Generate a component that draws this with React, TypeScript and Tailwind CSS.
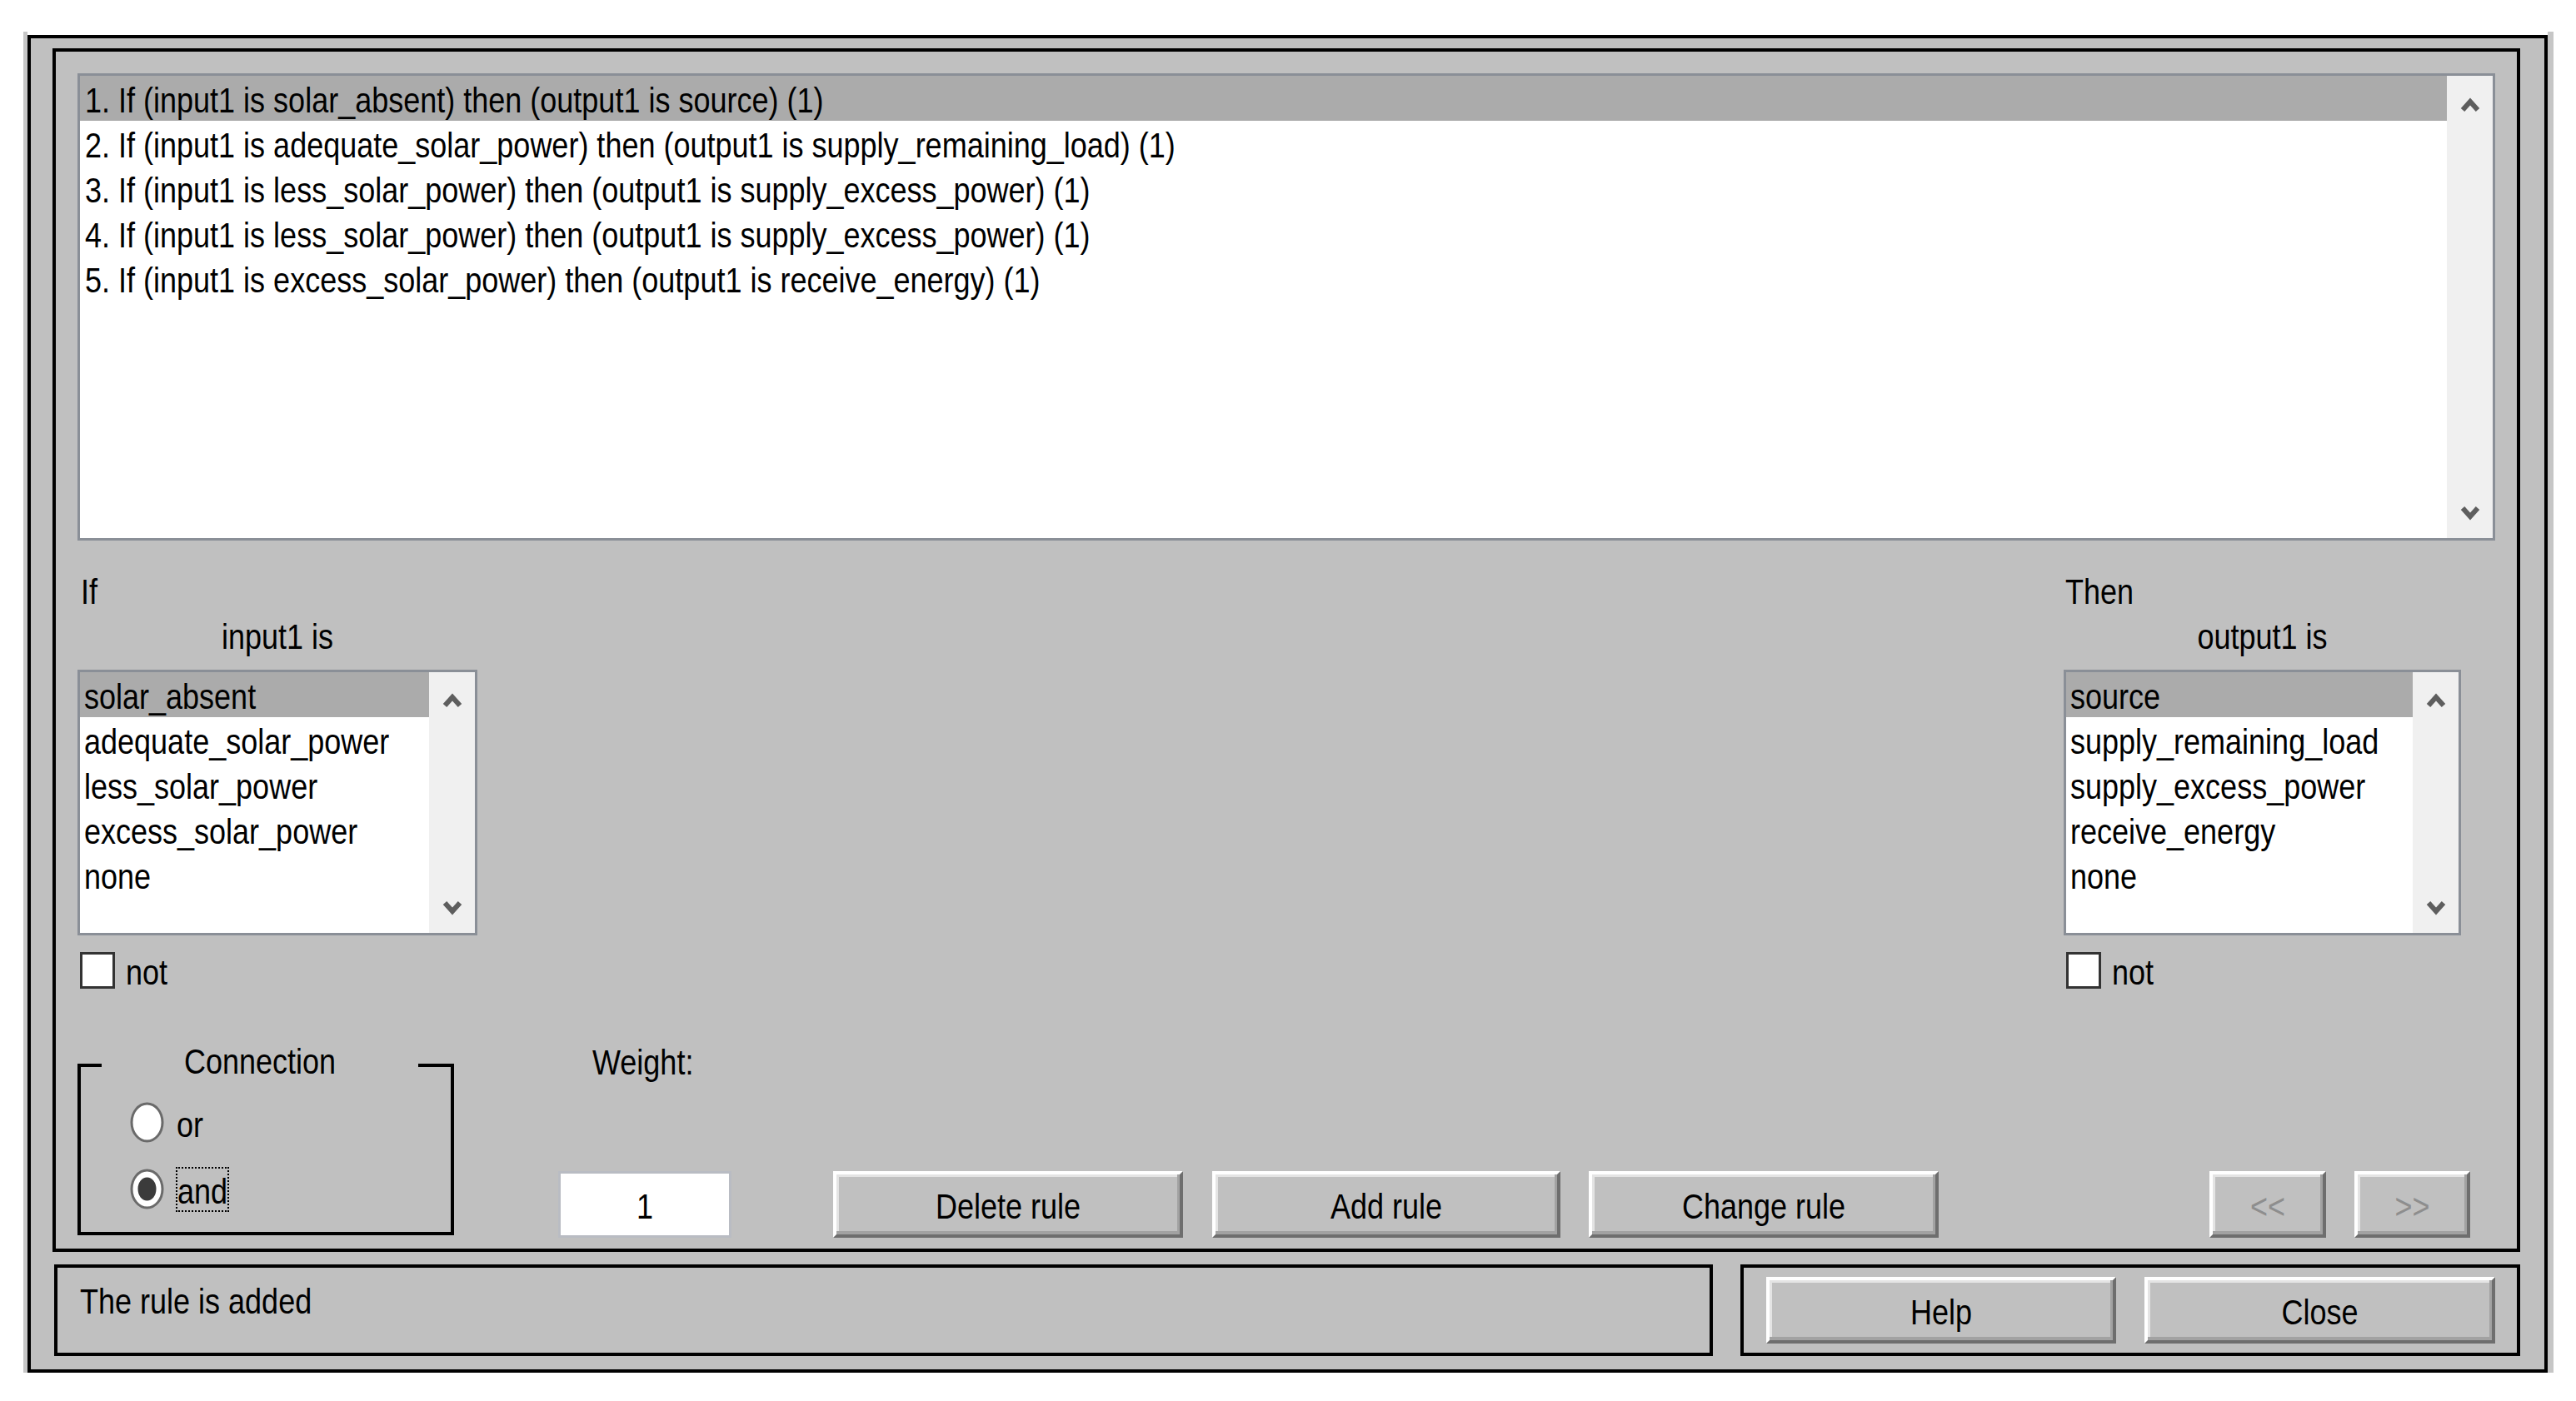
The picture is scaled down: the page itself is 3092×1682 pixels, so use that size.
import React from 'react';

const rules = [
  '1. If (input1 is solar_absent) then (output1 is source) (1)',
  '2. If (input1 is adequate_solar_power) then (output1 is supply_remaining_load) (1)',
  '3. If (input1 is less_solar_power) then (output1 is supply_excess_power) (1)',
  '4. If (input1 is less_solar_power) then (output1 is supply_excess_power) (1)',
  '5. If (input1 is excess_solar_power) then (output1 is receive_energy) (1)',
];

const inputTerms = ['solar_absent', 'adequate_solar_power', 'less_solar_power', 'excess_solar_power', 'none'];
const outputTerms = ['source', 'supply_remaining_load', 'supply_excess_power', 'receive_energy', 'none'];

// the screenshot is stretched vertically, so glyphs are a bit taller than Arial
function T({ children, up }: { children: React.ReactNode; up?: boolean }) {
  return (
    <span className={`inline-block scale-y-[1.16] ${up ? '-translate-y-[4px]' : 'translate-y-[3px]'}`}>
      {children}
    </span>
  );
}

function Arrow({ down }: { down?: boolean }) {
  return (
    <svg width="24" height="22" viewBox="0 0 24 22" className="block">
      <path
        d={down ? 'M3 6 L12 16 L21 6' : 'M3 16 L12 6 L21 16'}
        fill="none"
        stroke="#5e5e5e"
        strokeWidth="6"
      />
    </svg>
  );
}

function ScrollBar({ top, bottom }: { top: string; bottom: string }) {
  return (
    <div className={`flex w-[55px] flex-col items-center justify-between bg-[#f0f0f0] ${top} ${bottom}`}>
      <Arrow />
      <Arrow down />
    </div>
  );
}

function TermList({ items }: { items: string[] }) {
  return (
    <div className="mt-[15px] flex h-[319px] border-[3px] border-[#8a8f97] bg-white">
      <div className="flex-1">
        {items.map((t, i) => (
          <div key={t} className={`h-[54px] pl-[5px] leading-[54px] ${i === 0 ? 'bg-[#ababab]' : ''}`}>
            <T>{t}</T>
          </div>
        ))}
      </div>
      <ScrollBar top="pt-[24px]" bottom="pb-[20px]" />
    </div>
  );
}

function NotBox() {
  return (
    <div className="mt-[20px] flex items-center">
      <div className="ml-[3px] h-[44px] w-[42px] border-[3px] border-[#333333] bg-white" />
      <span className="ml-[13px] leading-[44px]">
        <T>not</T>
      </span>
    </div>
  );
}

function Button({ label, w, dim }: { label: string; w: string; dim?: boolean }) {
  return (
    <div
      className={`flex h-[80px] ${w} items-center justify-center border-4 border-t-white border-l-white border-r-[#6e6e6e] border-b-[#6e6e6e] bg-[#c0c0c0] shadow-[inset_-3px_-4px_0_#a2a2a2,inset_3px_3px_0_#e4e4e4] ${dim ? 'text-[#8e8e8e]' : 'text-black'}`}
    >
      <T>{label}</T>
    </div>
  );
}

function Radio({ on }: { on?: boolean }) {
  return (
    <svg width="41" height="49" viewBox="0 0 41 49" className="block">
      <ellipse cx="20.5" cy="24.5" rx="18.5" ry="22.5" fill="#ffffff" stroke="#6a6a6a" strokeWidth="3" />
      {on && <ellipse cx="20.5" cy="24.5" rx="11" ry="14" fill="#3b3b3b" />}
    </svg>
  );
}

export default function App() {
  return (
    <div className="h-[1682px] w-[3092px] bg-white pl-[28px] pt-[38px] font-['Liberation_Sans',Arial,sans-serif] text-[36px] text-black">
      <div className="w-[3037px] border-l-[5px] border-r-[7px] border-[#c6c6c6] pt-[4px]">
        <div className="h-[1606px] border-4 border-black bg-[#c0c0c0] pt-[12px]">
          {/* rule editor panel */}
          <div className="ml-[26px] h-[1445px] w-[2962px] border-4 border-black">
            <div className="mx-[26px] mt-[26px] flex h-[561px] border-[3px] border-[#8a8f97] bg-white">
              <div className="flex-1">
                {rules.map((r, i) => (
                  <div key={r} className={`h-[54px] pl-[6px] leading-[54px] ${i === 0 ? 'bg-[#ababab]' : ''}`}>
                    <T>{r}</T>
                  </div>
                ))}
              </div>
              <ScrollBar top="pt-[25px]" bottom="pb-[20px]" />
            </div>

            <div className="ml-[26px] mr-[67px] mt-[32px] flex justify-between">
              <div className="w-[480px]">
                <div className="pl-[4px] leading-[54px]">
                  <T>If</T>
                </div>
                <div className="text-center leading-[54px]">
                  <T>input1 is</T>
                </div>
                <TermList items={inputTerms} />
                <NotBox />
              </div>
              <div className="w-[477px]">
                <div className="pl-[2px] leading-[54px]">
                  <T>Then</T>
                </div>
                <div className="text-center leading-[54px]">
                  <T>output1 is</T>
                </div>
                <TermList items={outputTerms} />
                <NotBox />
              </div>
            </div>

            <div className="ml-[26px] mt-[59px] flex h-[240px] items-end">
              <fieldset className="mb-[3px] w-[452px] border-4 border-black pb-[27px]">
                <legend className="ml-[25px] w-[380px] p-0 text-left leading-[48px]">
                  <div className="text-center">
                    <T up>Connection</T>
                  </div>
                </legend>
                <div className="ml-[59px] mt-[20px] flex h-[49px] items-center">
                  <Radio />
                  <span className="ml-[15px]">
                    <T>or</T>
                  </span>
                </div>
                <div className="ml-[59px] mt-[31px] flex h-[49px] items-center">
                  <Radio on />
                  <span className="ml-[14px] border-2 border-dotted border-black leading-[50px]">
                    <T>and</T>
                  </span>
                </div>
              </fieldset>

              <div className="ml-[125px] flex h-[240px] w-[208px] flex-col justify-between">
                <div className="pl-[41px] leading-[54px]">
                  <T>Weight:</T>
                </div>
                <div className="flex h-[80px] items-center justify-center border-[3px] border-[#b9bcc3] bg-white">
                  <T>1</T>
                </div>
              </div>

              <div className="ml-[122px] flex items-end">
                <Button label="Delete rule" w="w-[420px]" />
                <div className="ml-[35px]">
                  <Button label="Add rule" w="w-[418px]" />
                </div>
                <div className="ml-[34px]">
                  <Button label="Change rule" w="w-[420px]" />
                </div>
                <div className="ml-[325px]">
                  <Button label="<<" w="w-[140px]" dim />
                </div>
                <div className="ml-[34px]">
                  <Button label=">>" w="w-[139px]" dim />
                </div>
              </div>
            </div>
          </div>

          {/* status and dialog buttons */}
          <div className="ml-[28px] mt-[15px] flex">
            <div className="h-[110px] w-[1991px] border-4 border-black pl-[27px] pt-[11px] leading-[54px]">
              <T>The rule is added</T>
            </div>
            <div className="ml-[33px] flex h-[110px] w-[936px] border-4 border-black pl-[27px] pt-[11px]">
              <Button label="Help" w="w-[420px]" />
              <div className="ml-[34px]">
                <Button label="Close" w="w-[421px]" />
              </div>
            </div>
          </div>
        </div>
      </div>
    </div>
  );
}
